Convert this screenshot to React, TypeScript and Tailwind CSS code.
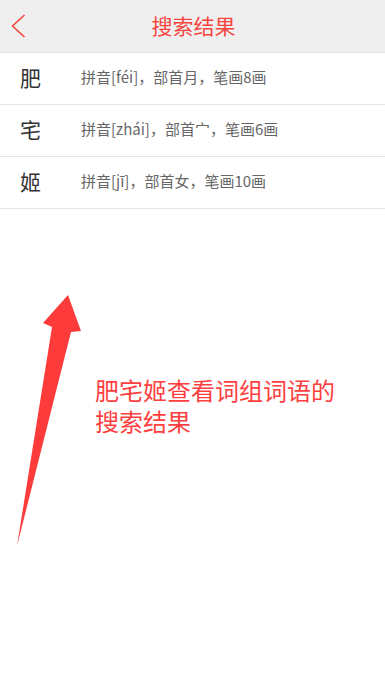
import React from "react";

const rows = [
  { ch: "肥", info: "拼音[féi]，部首月，笔画8画" },
  { ch: "宅", info: "拼音[zhái]，部首宀，笔画6画" },
  { ch: "姬", info: "拼音[jī]，部首女，笔画10画" },
];

const font = { fontFamily: '"Noto Sans CJK SC", "Noto Sans", sans-serif' };

export default function App() {
  return (
    <div className="relative w-[385px] h-[685px] bg-white overflow-hidden" style={font}>
      {/* header */}
      <div className="relative flex items-center justify-center h-[53px] bg-[#efefef] border-b border-[#e2e2e2]">
        <svg className="absolute left-0 top-0" width="40" height="52" viewBox="0 0 40 52">
          <polyline points="24.5,15 12.5,26 24.5,37" fill="none" stroke="#f6453e" strokeWidth="1.6" />
        </svg>
        <h1 className="text-[21px] leading-none text-[#f6453e] -mt-[1px] ml-[2px]">搜索结果</h1>
      </div>

      {/* results */}
      <div>
        {rows.map((r) => (
          <div key={r.ch} className="flex items-center h-[52px] pb-[2px] border-b border-[#e6e6e6]">
            <span className="w-[81px] pl-[20px] text-[21px] text-[#333]">{r.ch}</span>
            <span className="text-[15px] text-[#666]">{r.info}</span>
          </div>
        ))}
      </div>

      {/* annotation arrow */}
      <svg className="absolute left-0 top-0 pointer-events-none" width="385" height="685" viewBox="0 0 385 685">
        <polygon points="68,295 43,323 52,327 17,546 71,332 81,331" fill="#fd3b3b" />
      </svg>
      <div className="absolute left-[95px] top-[374px] text-[24px] leading-[31px] text-[#fd3f3f] w-[260px]">
        <p>肥宅姬查看词组词语的</p>
        <p>搜索结果</p>
      </div>
    </div>
  );
}
